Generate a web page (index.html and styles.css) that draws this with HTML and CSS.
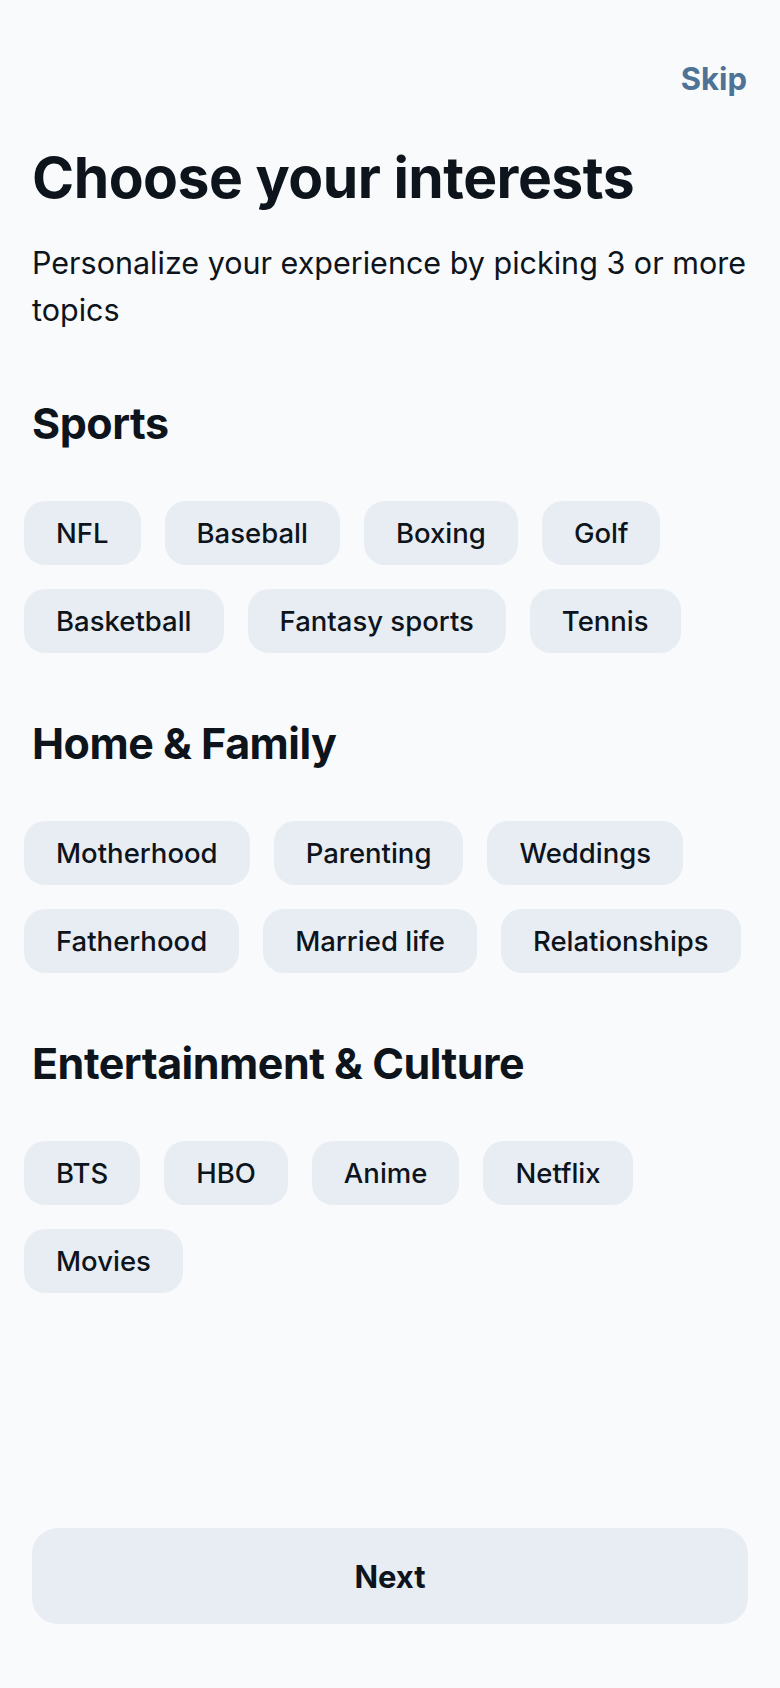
FILE: index.html
```html
<!DOCTYPE html>
<html lang="en">
<head>
<meta charset="utf-8">
<title>Choose your interests</title>
<link rel="stylesheet" href="styles.css">
</head>
<body>
<div class="page">
  <header class="topbar">
    <a class="skip" href="#">Skip</a>
  </header>
  <main class="content">
    <h1 class="title">Choose your interests</h1>
    <p class="subtitle">Personalize your experience by picking 3 or more topics</p>

    <section class="group">
      <h2 class="group-title">Sports</h2>
      <div class="chips">
        <button class="chip">NFL</button>
        <button class="chip">Baseball</button>
        <button class="chip">Boxing</button>
        <button class="chip">Golf</button>
        <button class="chip">Basketball</button>
        <button class="chip">Fantasy sports</button>
        <button class="chip">Tennis</button>
      </div>
    </section>

    <section class="group">
      <h2 class="group-title">Home &amp; Family</h2>
      <div class="chips">
        <button class="chip">Motherhood</button>
        <button class="chip">Parenting</button>
        <button class="chip">Weddings</button>
        <button class="chip">Fatherhood</button>
        <button class="chip">Married life</button>
        <button class="chip">Relationships</button>
      </div>
    </section>

    <section class="group">
      <h2 class="group-title">Entertainment &amp; Culture</h2>
      <div class="chips">
        <button class="chip">BTS</button>
        <button class="chip">HBO</button>
        <button class="chip">Anime</button>
        <button class="chip">Netflix</button>
        <button class="chip">Movies</button>
      </div>
    </section>
  </main>
  <footer class="footer">
    <button class="next">Next</button>
  </footer>
</div>
</body>
</html>
```

FILE: styles.css
```css
* { box-sizing: border-box; }

html, body {
  margin: 0;
  padding: 0;
  background: #f8fafc;
}

body {
  font-family: Inter, "Noto Sans", "Liberation Sans", sans-serif;
  color: #0e141b;
}

.page {
  min-height: 1688px;
  display: flex;
  flex-direction: column;
}

.topbar {
  display: flex;
  justify-content: flex-end;
  padding: 58px 33px 0 32px;
}

.skip {
  font-size: 31px;
  line-height: 41px;
  font-weight: 700;
  color: #4e7397;
  text-decoration: none;
}

.title {
  margin: 44px 0 0;
  padding: 0 32px;
  font-size: 57px;
  line-height: 70px;
  font-weight: 700;
  letter-spacing: -0.5px;
}

.subtitle {
  margin: 26px 0 0;
  padding: 0 32px;
  font-size: 30.5px;
  line-height: 47px;
  font-weight: 400;
}

.group-title {
  margin: 63px 0 0;
  padding: 0 32px;
  font-size: 43px;
  line-height: 55px;
  font-weight: 700;
  letter-spacing: -0.5px;
}

.chips {
  margin-top: 50px;
  padding: 0 24px;
  display: flex;
  flex-wrap: wrap;
  gap: 24px 24px;
}

.chip {
  height: 64px;
  padding: 0 32px;
  border: 0;
  border-radius: 21px;
  background: #e7edf3;
  color: #0e141b;
  font-family: inherit;
  font-size: 27.5px;
  font-weight: 500;
  line-height: 64px;
  cursor: pointer;
}

.footer {
  margin-top: auto;
  padding: 0 32px 64px;
}

.next {
  display: block;
  width: 100%;
  height: 96px;
  border: 0;
  border-radius: 26px;
  background: #e7edf3;
  color: #0e141b;
  font-family: inherit;
  font-size: 31px;
  font-weight: 700;
  cursor: pointer;
}
```
